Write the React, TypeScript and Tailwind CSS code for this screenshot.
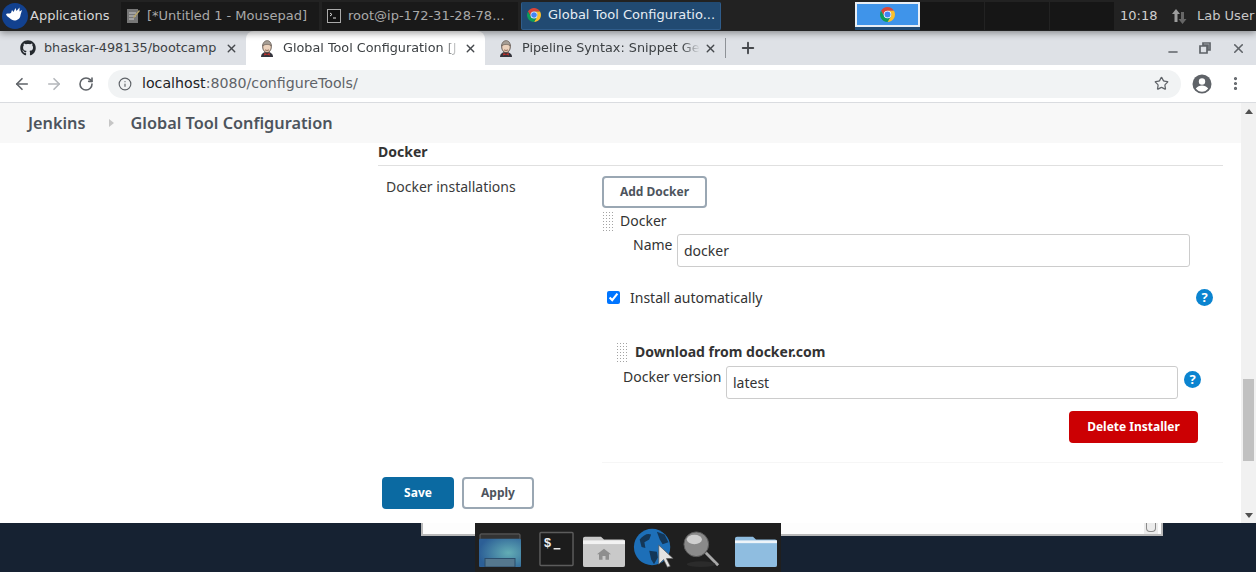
import { FaGithub } from "react-icons/fa";
import { X, Plus, Minus, ArrowLeft, ArrowRight, RotateCw, Info, Star, EllipsisVertical } from "lucide-react";

const ChromeLogo = ({ size = 14 }: { size?: number }) => (
  <svg width={size} height={size} viewBox="4 4 40 40" className="shrink-0">
    <path d="M6.680 14A20 20 0 0 1 41.320 14H24a10 10 0 0 0-8.660 15z" fill="#db4437" />
    <path d="M41.320 14A20 20 0 0 1 24 44L32.660 29A10 10 0 0 0 24 14z" fill="#fbc02d" />
    <path d="M24 44A20 20 0 0 1 6.680 14L15.340 29A10 10 0 0 0 32.660 29z" fill="#0f9d58" />
    <circle cx="24" cy="24" r="10" fill="#fff" />
    <circle cx="24" cy="24" r="8" fill="#4285f4" />
  </svg>
);

const JenkinsHead = () => (
  <svg width="16" height="17" viewBox="0 0 16 17" className="shrink-0">
    <path d="M2 17c0-3 2-5 6-5s6 2 6 5z" fill="#34343c" />
    <path d="M5.500 13l2.500 1 2.500-1 .5 2.500-3-1-3 1z" fill="#c4312b" />
    <ellipse cx="8" cy="7" rx="4.300" ry="5.500" fill="#ecd2bc" stroke="#4d4038" strokeWidth="0.8" />
    <path d="M3.600 6C3.500 2.500 6 .6 8.200 .6S12.500 2.500 12.400 6C10.500 4 6 3.800 3.600 6z" fill="#a69e95" stroke="#4d4038" strokeWidth="0.5" />
    <path d="M6 9.800c1 .8 3 .8 4 0" fill="none" stroke="#7a4a3a" strokeWidth="0.8" />
  </svg>
);

const DragHandle = () => (
  <div className="h-[20px] w-[11px] shrink-0 bg-[radial-gradient(circle,#a3a3a3_0.75px,transparent_0.95px)] bg-[length:3px_3px]" />
);

const HelpIcon = () => (
  <span className="flex h-[17px] w-[17px] shrink-0 items-center justify-center rounded-full bg-[#0b84d0] text-[13px] font-bold leading-none text-white">
    ?
  </span>
);

const TabItem = ({ icon, title, active, width, start, fade }: { icon: React.ReactNode; title: string; active?: boolean; width: string; start: string; fade?: boolean }) => (
  <div className={`flex h-[34px] items-center pr-[8px] ${start} ${width} ${active ? "rounded-t-[8px] bg-white" : ""}`}>
    <span className="flex w-[24px] shrink-0 items-center">{icon}</span>
    <span className={`min-w-0 flex-1 whitespace-nowrap text-[12.800px] text-[#3c4043] ${fade ? "[mask-image:linear-gradient(to_right,black_90%,transparent)]" : ""}`}>{title}</span>
    <X size={13} strokeWidth={2.500} className="ml-[4px] shrink-0 text-[#45484c]" />
  </div>
);

const TaskButton = ({ icon, title, width, active }: { icon: React.ReactNode; title: string; width: string; active?: boolean }) => (
  <div className={`flex h-[28px] items-center gap-[7px] pl-[5px] ${width} ${active ? "rounded-[2px] border-x border-b border-[#2f5c8a] bg-[#214a72] text-[#e6edf3]" : "bg-[#191919] text-[#a9a9a9]"}`}>
    {icon}
    <span className="whitespace-nowrap text-[13px]">{title}</span>
  </div>
);

const PagerCell = ({ active }: { active?: boolean }) => (
  <div className={`h-[28px] w-[65px] ${active ? "border-b-[3px] border-[#214a72]" : "border-r border-[#222] bg-[#161616]"}`}>
    {active && (
      <div className="flex h-full items-center justify-center border-2 border-[#e8eef5] bg-[#3f94ea]">
        <ChromeLogo size={15} />
      </div>
    )}
  </div>
);

export default function App() {
  return (
    <div className="flex h-[572px] w-[1256px] flex-col overflow-hidden bg-white font-['Noto_Sans','Open_Sans',sans-serif] text-[14px] text-[#333]">
      {/* xfce panel */}
      <header className="relative z-10 flex h-[31px] shrink-0 items-center bg-[#222] pl-[2px] font-['DejaVu_Sans',sans-serif] shadow-[0_2px_7px_rgba(0,0,0,0.4)]">
        <div className="flex w-[119px] items-center gap-[2px] text-[13px] text-[#d8d8d8]">
          <svg width="26" height="26" viewBox="0 0 26 26" className="shrink-0">
            <circle cx="13" cy="13" r="13" fill="#12418f" />
            <path d="M4 11c2-1 3 0 5-1l1-3 1.500 2 2-4 1 3 3-3.500 0 4 2.500-1.500-1.500 5c0 3-2.500 5-5 5.500s-4-1-6-2.500S4.500 13 4 11z" fill="#fff" />
          </svg>
          <span>Applications</span>
        </div>
        <TaskButton
          width="w-[198px]"
          title="[*Untitled 1 - Mousepad]"
          icon={
            <svg width="14" height="16" viewBox="0 0 14 16" className="shrink-0">
              <rect x="1" y="1" width="11" height="14" fill="#777" />
              <path d="M3 5h7M3 8h7M3 11h5" stroke="#ccc" strokeWidth="1" />
              <path d="M7 9l6-7 1 1-6 7z" fill="#b9a66a" />
            </svg>
          }
        />
        <TaskButton
          width="w-[196px] ml-[3px]"
          title="root@ip-172-31-28-78..."
          icon={
            <svg width="14" height="14" viewBox="0 0 14 14" className="shrink-0">
              <rect x="0.500" y="0.500" width="13" height="13" fill="#111" stroke="#aaa" />
              <path d="M3 4l2 1.500L3 7M6 9h3" stroke="#ddd" fill="none" />
            </svg>
          }
        />
        <TaskButton width="w-[200px] ml-[3px]" title="Global Tool Configuratio..." active icon={<ChromeLogo />} />
        <div className="ml-[134px] flex">
          <PagerCell active />
          <PagerCell />
          <PagerCell />
          <PagerCell />
        </div>
        <span className="ml-[5px] w-[50px] text-[13px] text-[#d0d0d0]">10:18</span>
        <svg width="18" height="18" viewBox="0 0 18 18" className="shrink-0">
          <path d="M6 2l4 5H7.500v8h-3V7H2z" fill="#9c9c9c" />
          <path d="M12.500 17l-4-5H11V5h3v7h2.500z" fill="#666" />
        </svg>
        <span className="ml-[9px] whitespace-nowrap text-[13px] text-[#c8c8c8]">Lab User</span>
      </header>

      {/* tab strip */}
      <div className="flex h-[34px] shrink-0 items-center bg-[#dee1e6] pl-[8px] font-['DejaVu_Sans',sans-serif]">
        <TabItem start="pl-[12px]" width="w-[238px]" title="bhaskar-498135/bootcamp" icon={<FaGithub size={16} className="text-[#24292e]" />} />
        <TabItem start="pl-[13px]" width="w-[239px]" active fade title="Global Tool Configuration [J" icon={<JenkinsHead />} />
        <TabItem start="pl-[13px]" width="w-[240px]" fade title="Pipeline Syntax: Snippet Ge" icon={<JenkinsHead />} />
        <div className="h-[20px] w-px bg-[#8e9297]" />
        <Plus size={18} strokeWidth={2.500} className="ml-[13px] text-[#45484c]" />
        <div className="ml-auto flex items-center pr-[10px] text-[#5f6368]">
          <Minus size={14} strokeWidth={2.500} className="mt-[8px]" />
          <svg width="12" height="12" viewBox="0 0 12 12" className="ml-[19px]">
            <path d="M4 1h7v7H9V3H4zM1 4h7v7H1z" fill="none" stroke="#5f6368" strokeWidth="1.700" />
          </svg>
          <X size={15} strokeWidth={2.500} className="ml-[20px]" />
        </div>
      </div>

      {/* toolbar */}
      <div className="flex h-[38px] shrink-0 items-center border-b border-[#dadce0] bg-white pl-[13px]">
        <ArrowLeft size={18} strokeWidth={2.200} className="text-[#5f6368]" />
        <ArrowRight size={18} strokeWidth={2.200} className="ml-[14px] text-[#b4b7bb]" />
        <RotateCw size={16} strokeWidth={2.400} className="ml-[15px] text-[#5f6368]" />
        <div className="ml-[14px] flex h-[28px] w-[1073px] items-center rounded-full bg-[#f1f3f4] pl-[10px] pr-[12px]">
          <Info size={14} strokeWidth={2} className="text-[#5f6368]" />
          <span className="ml-[10px] font-['DejaVu_Sans',sans-serif] text-[14.200px] text-[#202124]">
            localhost<span className="text-[#5f6368]">:8080/configureTools/</span>
          </span>
          <Star size={15} strokeWidth={2} className="ml-auto text-[#5f6368]" />
        </div>
        <svg width="20" height="20" viewBox="0 0 20 20" className="ml-[11px] shrink-0">
          <circle cx="10" cy="10" r="9.500" fill="#5f6368" />
          <circle cx="10" cy="7.500" r="3.200" fill="#fff" />
          <path d="M3.800 14.500c1.500-2 3.800-3 6.200-3s4.700 1 6.200 3c-1.500 2-3.800 3.300-6.200 3.300s-4.700-1.300-6.200-3.300z" fill="#fff" />
        </svg>
        <EllipsisVertical size={17} strokeWidth={2.500} className="ml-[15px] text-[#5f6368]" />
      </div>

      {/* page + scrollbar */}
      <div className="flex h-[420px] shrink-0">
        <div className="flex min-w-0 flex-1 flex-col">
          <nav className="flex h-[40px] shrink-0 items-center bg-[#f8f8f8] pl-[28px] text-[16.300px] font-semibold text-[#4d545d]">
            <span>Jenkins</span>
            <svg width="5" height="8" viewBox="0 0 5 8" className="ml-[23px]">
              <path d="M0 0l5 4-5 4z" fill="#c6c6c6" />
            </svg>
            <span className="ml-[17px]">Global Tool Configuration</span>
          </nav>

          <main className="flex-1 pl-[378px] pr-[18px]">
            <div className="h-[23px] border-b border-[#e0e0e0] text-[14px] font-bold leading-[18px]">Docker</div>
            <div className="flex">
              <div className="w-[224px] pl-[8px] pt-[11px] leading-[20px] text-[#3b3b3b]">Docker installations</div>
              <div className="flex-1 pt-[10px]">
                <button className="h-[32px] w-[105px] rounded-[4px] border-2 border-[#9aa7b3] text-[12px] font-bold text-[#4d545d]">Add Docker</button>

                <div className="mt-[3px] flex h-[20px] items-start gap-[7px]">
                  <DragHandle />
                  <span className="leading-[20px]">Docker</span>
                </div>

                <div className="mt-[3px] flex pl-[31px]">
                  <span className="w-[44px] leading-[22px]">Name</span>
                  <input readOnly value="docker" className="h-[33px] w-[513px] rounded-[3px] border border-[#ccc] px-[6px] text-[14px] text-[#333]" />
                </div>

                <div className="mt-[22px] flex h-[17px] items-center pr-[10px]">
                  <input type="checkbox" readOnly checked className="ml-[5px] h-[13px] w-[13px] accent-[#0075ff]" />
                  <span className="ml-[10px]">Install automatically</span>
                  <span className="ml-auto"><HelpIcon /></span>
                </div>

                <div className="mt-[36px] flex h-[20px] items-start gap-[8px] pl-[14px]">
                  <DragHandle />
                  <span className="font-bold leading-[20px]">Download from docker.com</span>
                </div>

                <div className="mt-[4px] flex pl-[21px]">
                  <span className="w-[103px] leading-[22px]">Docker version</span>
                  <input readOnly value="latest" className="h-[33px] w-[452px] rounded-[3px] border border-[#ccc] px-[6px] text-[14px] text-[#333]" />
                  <span className="ml-[6px] mt-[5px]"><HelpIcon /></span>
                </div>

                <button className="ml-[467px] mt-[12px] block h-[32px] w-[129px] rounded-[4px] bg-[#cc0003] text-[12px] font-bold text-white">Delete Installer</button>
                <div className="mt-[19px] border-t border-[#f6f6f6]" />
              </div>
            </div>

            <div className="mt-[14px] flex gap-[8px] pl-[4px]">
              <button className="h-[32px] w-[72px] rounded-[4px] bg-[#0b6aa2] text-[12px] font-bold text-white">Save</button>
              <button className="h-[32px] w-[72px] rounded-[4px] border-2 border-[#9aa7b3] text-[12px] font-bold text-[#4d545d]">Apply</button>
            </div>
          </main>
        </div>

        {/* scrollbar */}
        <div className="flex w-[15px] shrink-0 flex-col items-center bg-[#f1f1f1] pb-[5px] pt-[6px]">
          <div className="h-0 w-0 border-x-[4px] border-b-[5px] border-x-transparent border-b-[#505050]" />
          <div className="mt-[265px] h-[82px] w-[11px] bg-[#c1c1c1]" />
          <div className="mt-auto h-0 w-0 border-x-[4px] border-t-[5px] border-x-transparent border-t-[#505050]" />
        </div>
      </div>

      {/* desktop + dock */}
      <div className="relative flex-1 bg-[#162232]">
        <div className="ml-[421px] flex h-[13px] w-[742px] justify-end border-x-2 border-b-2 border-[#b9b9b9] bg-[#fdfdfd] pr-[3px]">
          <div className="h-[11px] w-[14px] bg-[#ececec] px-[2px]">
            <div className="h-[9px] rounded-b-[4px] border-x border-b border-[#8a8a8a]" />
          </div>
        </div>
        <div className="absolute left-[475px] top-0 flex h-[49px] w-[306px] items-end bg-[#1f1f1f] pb-[5px] pl-[4px]">
          <svg width="42" height="34" viewBox="0 0 42 36" preserveAspectRatio="none">
            <defs>
              <radialGradient id="dsk" cx="0.7" cy="0.5" r="0.7">
                <stop offset="0" stopColor="#63adb5" />
                <stop offset="1" stopColor="#2c5f96" />
              </radialGradient>
            </defs>
            <rect x="1" y="1" width="40" height="6" rx="1" fill="#333" stroke="#666" />
            <rect x="0" y="6" width="42" height="30" rx="1" fill="url(#dsk)" />
            <rect x="6" y="27" width="30" height="9" fill="#55788f" stroke="#2b4c6a" />
          </svg>
          <svg width="35" height="36" viewBox="0 0 36 36" className="ml-[18px]">
            <rect x="1" y="1" width="34" height="34" rx="1" fill="#1c1c1c" stroke="#5c5c5c" strokeWidth="1.500" />
            <text x="5" y="16" fontFamily="Liberation Mono, monospace" fontSize="13" fontWeight="700" fill="#eee">$</text>
            <rect x="15" y="17" width="7" height="1.500" fill="#eee" />
          </svg>
          <svg width="42" height="33" viewBox="0 0 42 36" preserveAspectRatio="none" className="ml-[9px]">
            <path d="M2 3h16l3 3h19a2 2 0 0 1 2 2v26a2 2 0 0 1-2 2H2a2 2 0 0 1-2-2V5a2 2 0 0 1 2-2z" fill="#c9c9c9" />
            <rect x="0" y="7" width="42" height="4" fill="#f2f2f2" />
            <path d="M21 16l7 6h-2v6h-3.500v-4h-3v4H16v-6h-2z" fill="#8e8e8e" />
          </svg>
          <svg width="42" height="44" viewBox="0 0 42 46" className="relative z-10 ml-[8px] -mb-[3px]">
            <circle cx="19" cy="22" r="19" fill="#1d6fb8" />
            <path d="M6 14c4-5 9-7 12-5l-2 5-5 3 1 6-4-1zM24 6l8 3 4 8-6 2-3-5zM16 26l8 1 1 6-4 7-3-5z" fill="#143758" />
            <path d="M26 20v20l5-5 4 8 3-1-4-8h7z" fill="#e3e3e3" stroke="#555" strokeWidth="0.700" />
          </svg>
          <svg width="40" height="38" viewBox="0 0 42 40" className="ml-[7px] -mb-[1px]">
            <circle cx="15" cy="15" r="13" fill="#8a8a8a" stroke="#5a5a5a" />
            <ellipse cx="13" cy="10" rx="8" ry="5" fill="#cfcfcf" />
            <path d="M25 24l13 13" stroke="#a8a8a8" strokeWidth="3" />
            <ellipse cx="20" cy="36" rx="15" ry="3" fill="#2b2b2b" />
          </svg>
          <svg width="42" height="33" viewBox="0 0 42 36" preserveAspectRatio="none" className="ml-[13px]">
            <path d="M2 3h16l3 3h19a2 2 0 0 1 2 2v26a2 2 0 0 1-2 2H2a2 2 0 0 1-2-2V5a2 2 0 0 1 2-2z" fill="#8fbde0" />
            <rect x="0" y="7" width="42" height="3" fill="#eef4f9" />
          </svg>
        </div>
      </div>
    </div>
  );
}
